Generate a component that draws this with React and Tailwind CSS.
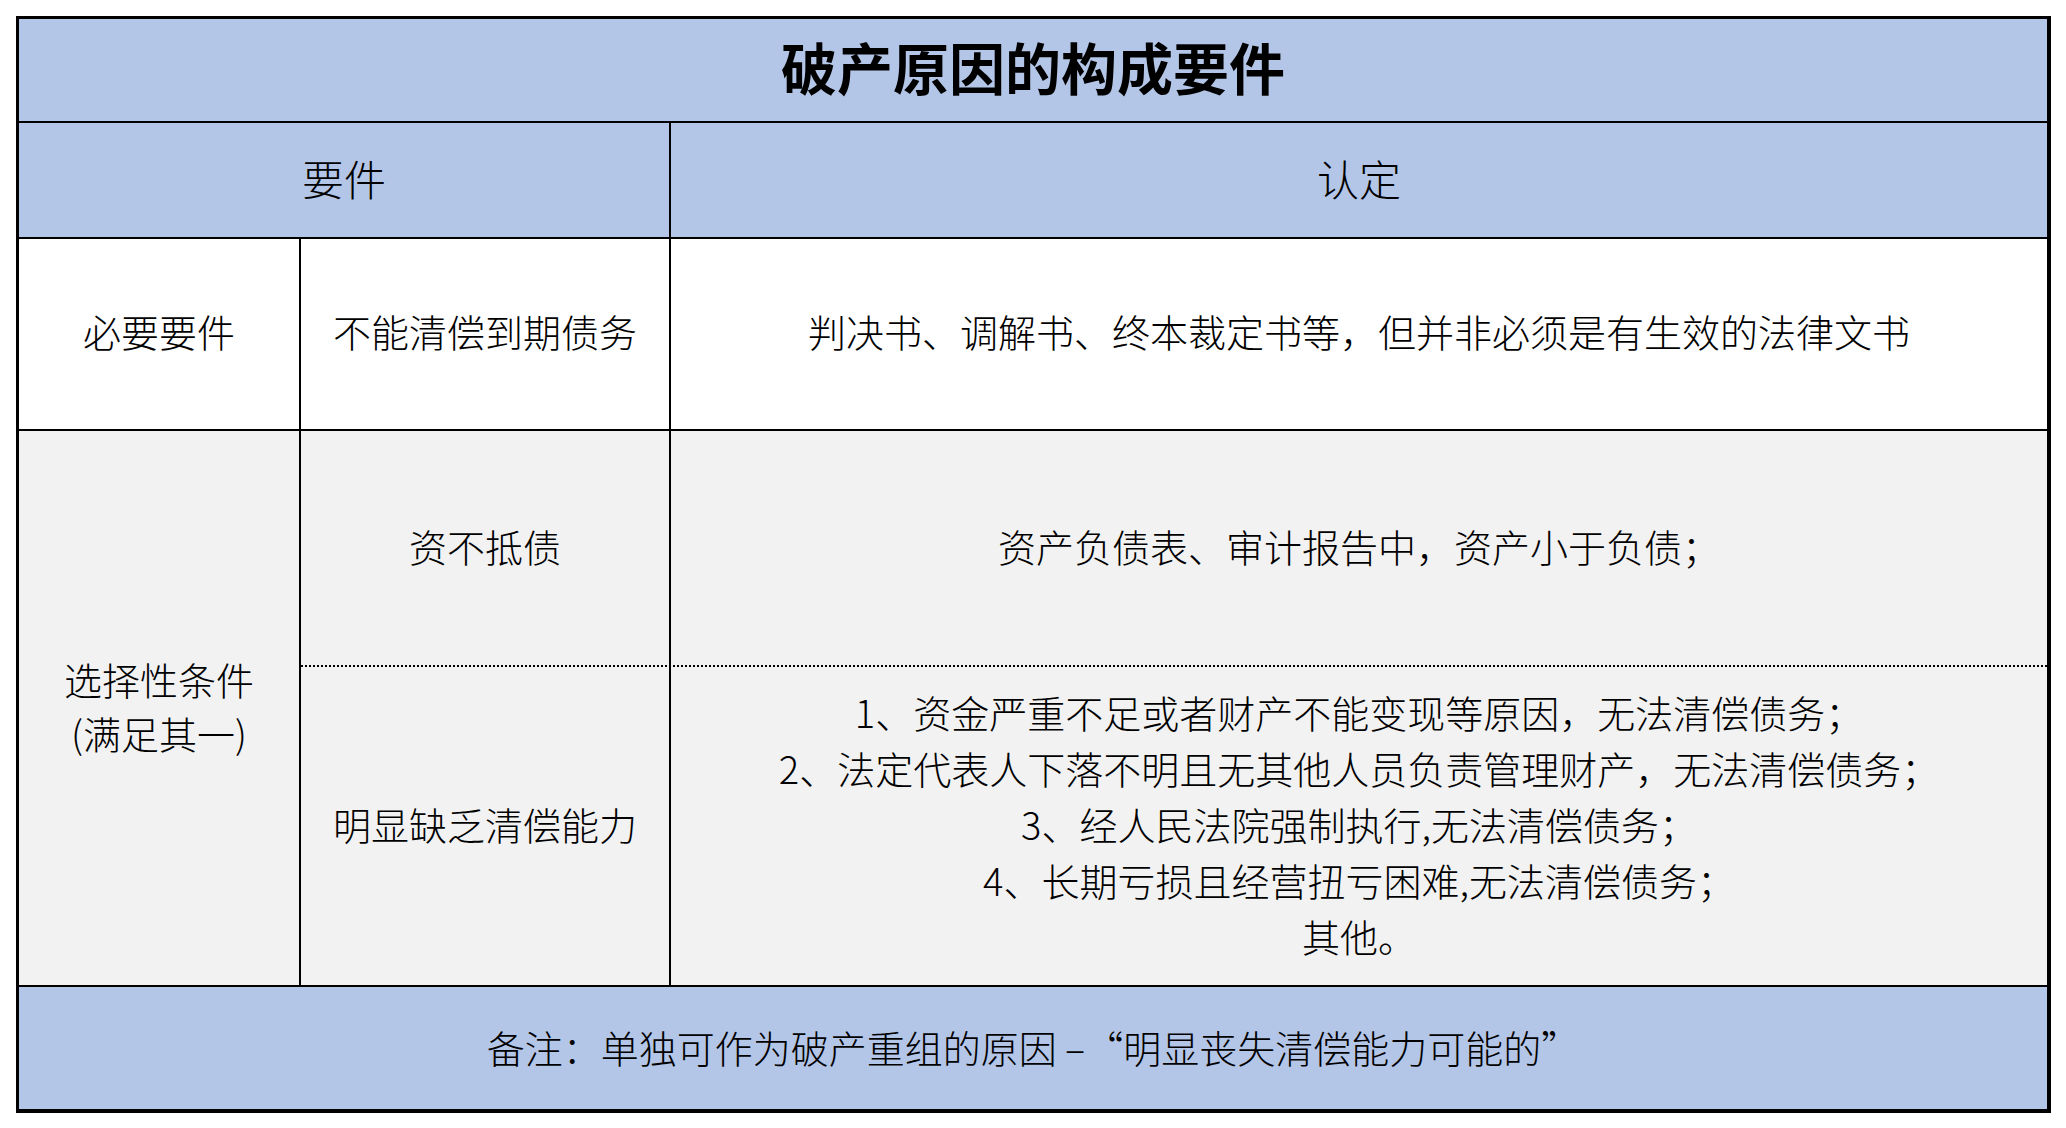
import React from "react";

const lines = [
  "1、资金严重不足或者财产不能变现等原因，无法清偿债务；",
  "2、法定代表人下落不明且无其他人员负责管理财产，无法清偿债务；",
  "3、经人民法院强制执行,无法清偿债务；",
  "4、长期亏损且经营扭亏困难,无法清偿债务；",
  "其他。",
];

const App = () => {
  return (
    <div className="min-h-[1128px] w-[2066px] bg-white p-[16px] font-['Noto_Sans_CJK_SC','Noto_Sans',sans-serif] font-light text-black">
      <div className="flex w-[2035px] flex-col border-t-[3px] border-r-4 border-b-4 border-l-[3px] border-black">
        {/* title */}
        <div className="flex h-[104px] items-center justify-center border-b-2 border-black bg-[#b4c6e7] pb-[8px] text-[56px] font-bold">
          破产原因的构成要件
        </div>

        {/* header */}
        <div className="flex h-[116px] border-b-2 border-black bg-[#b4c6e7] text-[42px]">
          <div className="flex w-[652px] items-center justify-center border-r-2 border-black pb-[5px]">
            要件
          </div>
          <div className="flex flex-1 items-center justify-center pb-[5px]">认定</div>
        </div>

        {/* necessary */}
        <div className="flex h-[192px] border-b-2 border-black bg-white text-[38px]">
          <div className="flex w-[282px] items-center justify-center border-r-2 border-black pb-[7px]">
            必要要件
          </div>
          <div className="flex w-[370px] items-center justify-center border-r-2 border-black pb-[7px]">
            不能清偿到期债务
          </div>
          <div className="flex flex-1 items-center justify-center pb-[7px]">
            判决书、调解书、终本裁定书等，但并非必须是有生效的法律文书
          </div>
        </div>

        {/* optional */}
        <div className="flex h-[556px] border-b-2 border-black bg-[#f2f2f2] text-[38px]">
          <div className="flex w-[282px] flex-col items-center justify-center border-r-2 border-black pb-[5px] leading-[54px]">
            <span>选择性条件</span>
            <span>(满足其一)</span>
          </div>
          <div className="flex flex-1 flex-col">
            <div className="flex h-[236px] border-b-2 border-dotted border-black">
              <div className="flex w-[370px] items-center justify-center border-r-2 border-black pb-[5px]">
                资不抵债
              </div>
              <div className="flex flex-1 items-center justify-center pb-[5px]">
                资产负债表、审计报告中，资产小于负债；
              </div>
            </div>
            <div className="flex flex-1">
              <div className="flex w-[370px] items-center justify-center border-r-2 border-black pb-[5px]">
                明显缺乏清偿能力
              </div>
              <div className="flex flex-1 flex-col items-center justify-center pb-[5px] leading-[56px]">
                {lines.map((l) => (
                  <span key={l}>{l}</span>
                ))}
              </div>
            </div>
          </div>
        </div>

        {/* note */}
        <div className="flex h-[122px] items-center justify-center bg-[#b4c6e7] pb-[3px] text-[38px]">
          备注：单独可作为破产重组的原因 –“明显丧失清偿能力可能的”
        </div>
      </div>
    </div>
  );
};

export default App;
